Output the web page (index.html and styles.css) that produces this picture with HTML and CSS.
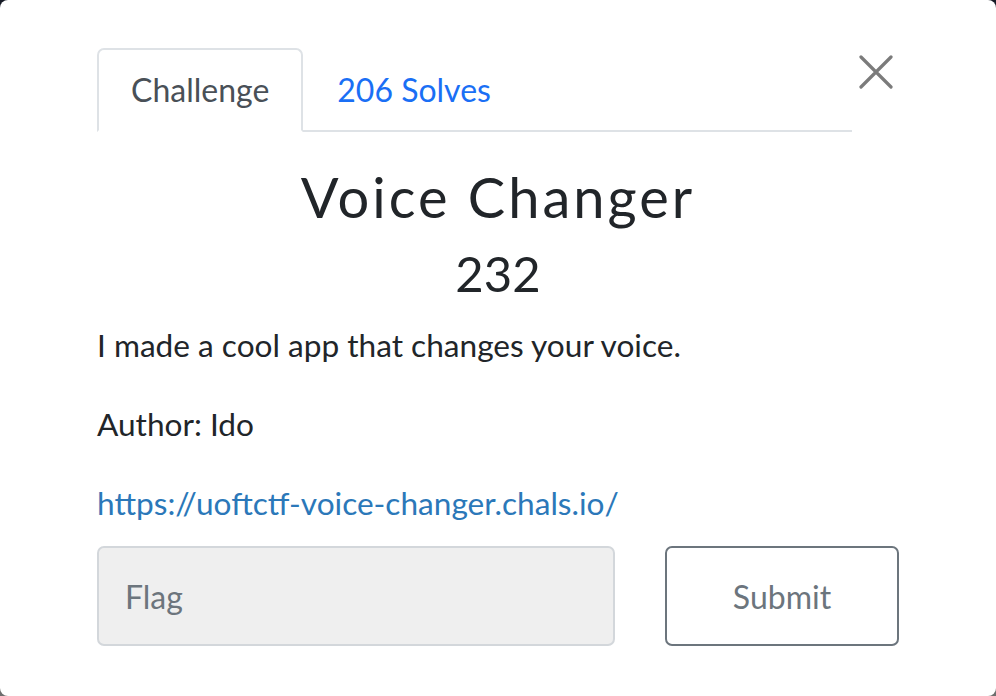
FILE: index.html
```html
<!DOCTYPE html>
<html lang="en">
<head>
<meta charset="utf-8">
<title>Voice Changer</title>
<link rel="stylesheet" href="styles.css">
</head>
<body>
<div class="modal">
  <div class="header">
    <ul class="tabs">
      <li class="tab active">Challenge</li>
      <li class="tab"><a href="#">206 Solves</a></li>
    </ul>
    <button class="close" aria-label="Close">
      <svg width="34" height="34" viewBox="0 0 34 34"><path d="M2 2 L32 32 M32 2 L2 32" stroke="#7b7b7b" stroke-width="3.2" stroke-linecap="round"/></svg>
    </button>
  </div>
  <h2 class="title">Voice Changer</h2>
  <h3 class="value">232</h3>
  <div class="desc">
    <p>I made a cool app that changes your voice.</p>
    <p>Author: Ido</p>
    <p><a class="link" href="#">https://uoftctf-voice-changer.chals.io/</a></p>
  </div>
  <div class="submit-row">
    <input class="flag" type="text" placeholder="Flag">
    <button class="submit">Submit</button>
  </div>
</div>
</body>
</html>
```
FILE: styles.css
```css
* { box-sizing: border-box; }
html, body { margin: 0; padding: 0; }
body {
  width: 996px;
  height: 696px;
  background: linear-gradient(#161a26, #6e6e6e);
  font-family: Lato, "Open Sans", sans-serif;
  color: #212529;
  overflow: hidden;
}
.modal {
  width: 996px;
  height: 696px;
  background: #fff;
  border-radius: 8px;
  padding: 48px 97px 0 97px;
}
.header {
  display: flex;
  align-items: flex-start;
}
.tabs {
  list-style: none;
  margin: 0;
  padding: 0;
  display: flex;
  width: 755px;
  border-bottom: 2px solid #dee2e6;
}
.tab {
  font-size: 32px;
  line-height: 45px;
  padding: 17px 32px 18px;
  margin-bottom: -2px;
  border: 2px solid transparent;
  border-top-left-radius: 7px;
  border-top-right-radius: 7px;
  color: #495057;
}
.tab.active {
  border-color: #dee2e6 #dee2e6 #fff;
  background: #fff;
}
.tab a {
  color: #1a6ff5;
  text-decoration: none;
}
.close {
  margin-left: auto;
  margin-top: 7px;
  margin-right: 6px;
  padding: 0;
  border: 0;
  background: none;
  width: 34px;
  height: 34px;
}
.close svg { display: block; }
.title {
  margin: 31px 0 14px;
  text-align: center;
  font-size: 56px;
  line-height: 67px;
  font-weight: 400;
  letter-spacing: 3px;
}
.value {
  margin: 0 0 19px;
  text-align: center;
  font-size: 49px;
  line-height: 59px;
  font-weight: 400;
}
.desc p {
  margin: 0 0 33px;
  font-size: 31.6px;
  line-height: 46px;
}
.desc p:last-child { margin-bottom: 20px; }
.link {
  color: #2b78b9;
  text-decoration: none;
}
.submit-row {
  display: grid;
  grid-template-columns: 518px 1fr;
  column-gap: 50px;
}
.flag {
  height: 100px;
  background: #efefef;
  border: 2px solid #d3d7db;
  border-radius: 7px;
  padding: 0 26px;
  font-family: Lato, sans-serif;
  font-size: 32px;
  color: #495057;
}
.flag::placeholder { color: #6c757d; }
.submit {
  height: 100px;
  background: #fff;
  border: 2px solid #6c757d;
  border-radius: 7px;
  font-family: Lato, sans-serif;
  font-size: 32px;
  color: #6c757d;
}
```
